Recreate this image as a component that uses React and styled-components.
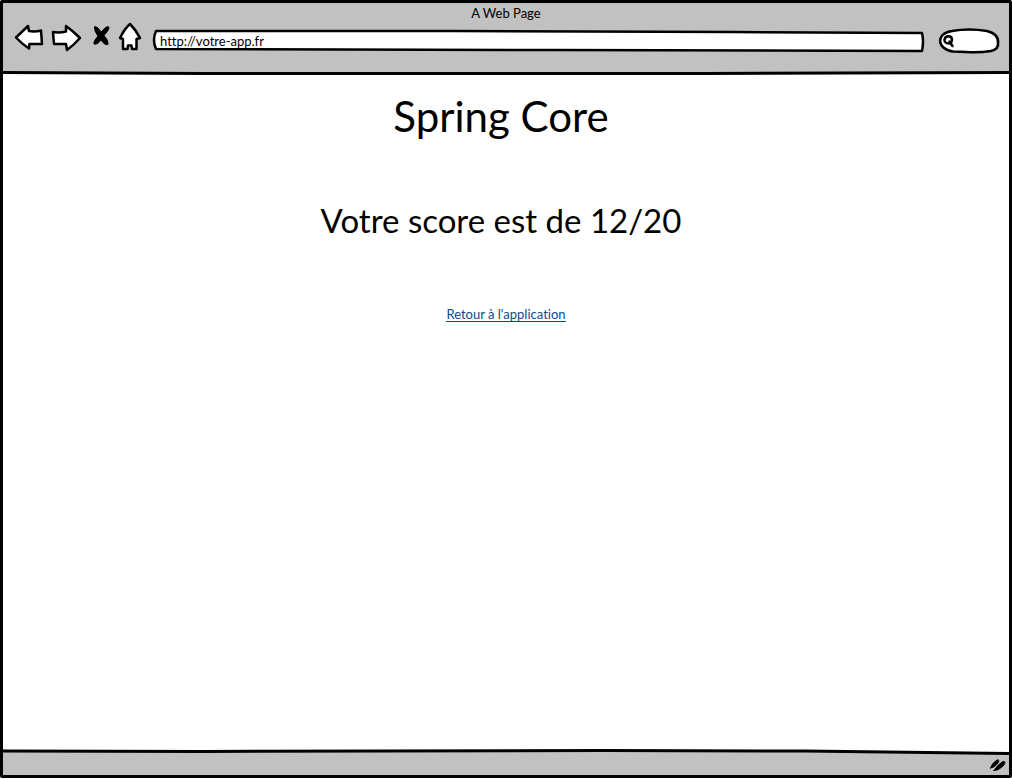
import React from "react";
import styled, { createGlobalStyle } from "styled-components";

const ink = "#000";
const chrome = "#c1c1c1";

const GlobalStyle = createGlobalStyle`
  *, *::before, *::after { box-sizing: border-box; }
  body {
    margin: 0;
    background: #fff;
    color: ${ink};
    font-family: Lato, "Open Sans", sans-serif;
    font-variant-ligatures: none;
  }
`;

const Window = styled.div`
  display: flex;
  flex-direction: column;
  min-height: 100vh;
  padding-bottom: 1px;
`;

const Frame = styled.div`
  display: flex;
  flex: 1;
  flex-direction: column;
  border: 3px solid ${ink};
  border-radius: 2px;
`;

const TitleBar = styled.header`
  background: ${chrome};
`;

const WindowTitle = styled.div`
  height: 18px;
  font-size: 13px;
  line-height: 20px;
  text-align: center;
`;

const Toolbar = styled.nav`
  display: flex;
  align-items: center;
  height: 32px;
  margin-bottom: 17px;
  padding: 0 10px 0 11px;
`;

const IconButton = styled.button`
  display: flex;
  margin: 0 ${(p) => p.$gap}px 0 0;
  padding: 0;
  border: 0;
  background: none;
  cursor: pointer;
`;

const Icon = styled.svg`
  display: block;
  overflow: visible;
  fill: #fff;
  stroke: ${ink};
  stroke-width: 2.5;
  stroke-linejoin: round;
  stroke-linecap: round;
`;

const Field = styled.label`
  position: relative;
  display: flex;
  align-items: center;
  align-self: flex-end;
  flex: ${(p) => (p.$wide ? "1" : "0 0 60px")};
  min-width: 0;
  height: 24px;
  margin-left: ${(p) => (p.$wide ? 0 : 15)}px;
  padding: ${(p) => (p.$wide ? "0 7px" : "0 6px 0 4px")};
`;

const Outline = styled.svg`
  position: absolute;
  inset: 0;
  width: 100%;
  height: 100%;
  overflow: visible;
  fill: #fff;
  stroke: ${ink};
  stroke-width: 2.5;
  stroke-linejoin: round;
`;

const TextInput = styled.input`
  position: relative;
  flex: 1;
  min-width: 0;
  width: 100%;
  height: 18px;
  padding: 0;
  border: 0;
  outline: 0;
  background: transparent;
  color: ${ink};
  font: 13px/18px Lato, "Open Sans", sans-serif;
  font-variant-ligatures: none;
`;

const Glass = styled(Icon)`
  position: relative;
  flex: none;
  fill: none;
`;

const Rule = styled.svg`
  display: block;
  width: 100%;
  height: 6px;
  background: linear-gradient(${(p) => (p.$footer ? `#fff 50%, ${chrome} 50%` : `${chrome} 50%, #fff 50%`)});
`;

const Page = styled.main`
  display: flex;
  flex: 1;
  flex-direction: column;
  align-items: center;
  padding: 16px 10px 0 0;
`;

const Heading = styled.h1`
  margin: 0;
  font-size: 42px;
  font-weight: 400;
  line-height: 48px;
`;

const Score = styled.p`
  margin: 60px 0 67px;
  font-size: 33px;
  line-height: 40px;
`;

const BackLink = styled.a`
  margin-left: 10px;
  border-bottom: 1px solid #0b4a8c;
  color: #0b4a8c;
  font-size: 13px;
  line-height: 14px;
  text-decoration: none;
`;

const StatusBar = styled.footer`
  display: flex;
  align-items: center;
  justify-content: flex-end;
  height: 20px;
  padding-right: 3px;
  background: ${chrome};
`;

export default function App() {
  return (
    <>
      <GlobalStyle />
      <Window>
        <Frame>
          <TitleBar>
            <WindowTitle>A Web Page</WindowTitle>
            <Toolbar aria-label="Navigation">
              <IconButton type="button" aria-label="Back" $gap={9}>
                <Icon width="29" height="28" viewBox="0 0 29 28">
                  <path d="M2 14.5 L14 3 L15 8 Q21 9 27 7.500 L28 21 L15.500 21 L15 25.500 Q8 21 2 14.500Z" />
                </Icon>
              </IconButton>
              <IconButton type="button" aria-label="Forward" $gap={11}>
                <Icon width="29" height="28" viewBox="0 0 29 28">
                  <path d="M1 9 Q7 10 14 8.500 V3 Q21 8 28 15 Q22 22 15 27 L14 21 L2 21 Z" />
                </Icon>
              </IconButton>
              <IconButton type="button" aria-label="Stop" $gap={8}>
                <Icon width="18" height="24" viewBox="0 0 18 24">
                  <path
                    d="M2.500 2 Q5 0.500 9 7 L13 3 Q15 1 17 2 Q17 5 12 10.500 Q17 16 16 19.500 Q12 20.500 9 14.500 Q6 20 2 19 Q1 17 6 11 Q2 6 2.500 2Z"
                    fill={ink}
                    strokeWidth="1"
                  />
                </Icon>
              </IconButton>
              <IconButton type="button" aria-label="Home" $gap={12}>
                <Icon width="23" height="28" viewBox="0 0 23 28">
                  <path d="M12 1 Q7 5 2 15 L5 16 L5 26 L9.500 26 L10 22.500 H13.500 L14 26 L18.500 26 L18.500 16 L22 15 Q18 7 12 1Z" />
                </Icon>
              </IconButton>
              <Field $wide>
                <Outline viewBox="0 0 770 24" preserveAspectRatio="none" aria-hidden="true">
                  <path
                    d="M3 2 L300 2 L580 3 L768 4 Q770 12 768 22 L400 21 L3 20 Q-1 11 3 2Z"
                    vectorEffect="non-scaling-stroke"
                  />
                </Outline>
                <TextInput type="text" aria-label="Address" defaultValue="http://votre-app.fr" />
              </Field>
              <Field>
                <Outline viewBox="0 0 60 24" aria-hidden="true">
                  <path d="M13 2 Q30 -1 48 2 Q60 5 59 14 Q60 20 52 22 Q40 24 27 23 L14 22.500 C-3 20 -3 4 13 2Z" />
                </Outline>
                <Glass width="12" height="12" viewBox="0 0 12 12" aria-hidden="true">
                  <path d="M9 5 C9 0 2 0 1.500 5 C1 9 9 10 9 5Z M6.500 6.500 L9.500 11" />
                </Glass>
                <TextInput type="search" aria-label="Search" />
              </Field>
            </Toolbar>
          </TitleBar>
          <Rule viewBox="0 0 1004 6" preserveAspectRatio="none" aria-hidden="true">
            <path d="M0 2.500 L200 3.500 L700 3.500 L1004 2.500" fill="none" stroke={ink} strokeWidth="3" />
          </Rule>
          <Page>
            <Heading>Spring Core</Heading>
            <Score>Votre score est de 12/20</Score>
            <BackLink href="#application">Retour à l'application</BackLink>
          </Page>
          <Rule $footer viewBox="0 0 1004 6" preserveAspectRatio="none" aria-hidden="true">
            <path d="M0 2 L200 2 L600 1.500 L800 2 L1004 5 V6 H0Z" fill={chrome} />
            <path d="M0 2 L200 2.500 L600 1.500 L800 2 L1004 4.500" fill="none" stroke={ink} strokeWidth="3" />
          </Rule>
          <StatusBar>
            <Icon width="17" height="14" viewBox="0 0 17 14" aria-hidden="true">
              <path
                d="M1.500 10 Q3 5 8 2 Q11 1 9 5 Q5 10 1.500 10Z M5 12.500 Q8 7 14 3.500 Q18 3 14 8 Q9 13 5 12.500Z"
                fill={ink}
                strokeWidth="1"
              />
            </Icon>
          </StatusBar>
        </Frame>
      </Window>
    </>
  );
}
